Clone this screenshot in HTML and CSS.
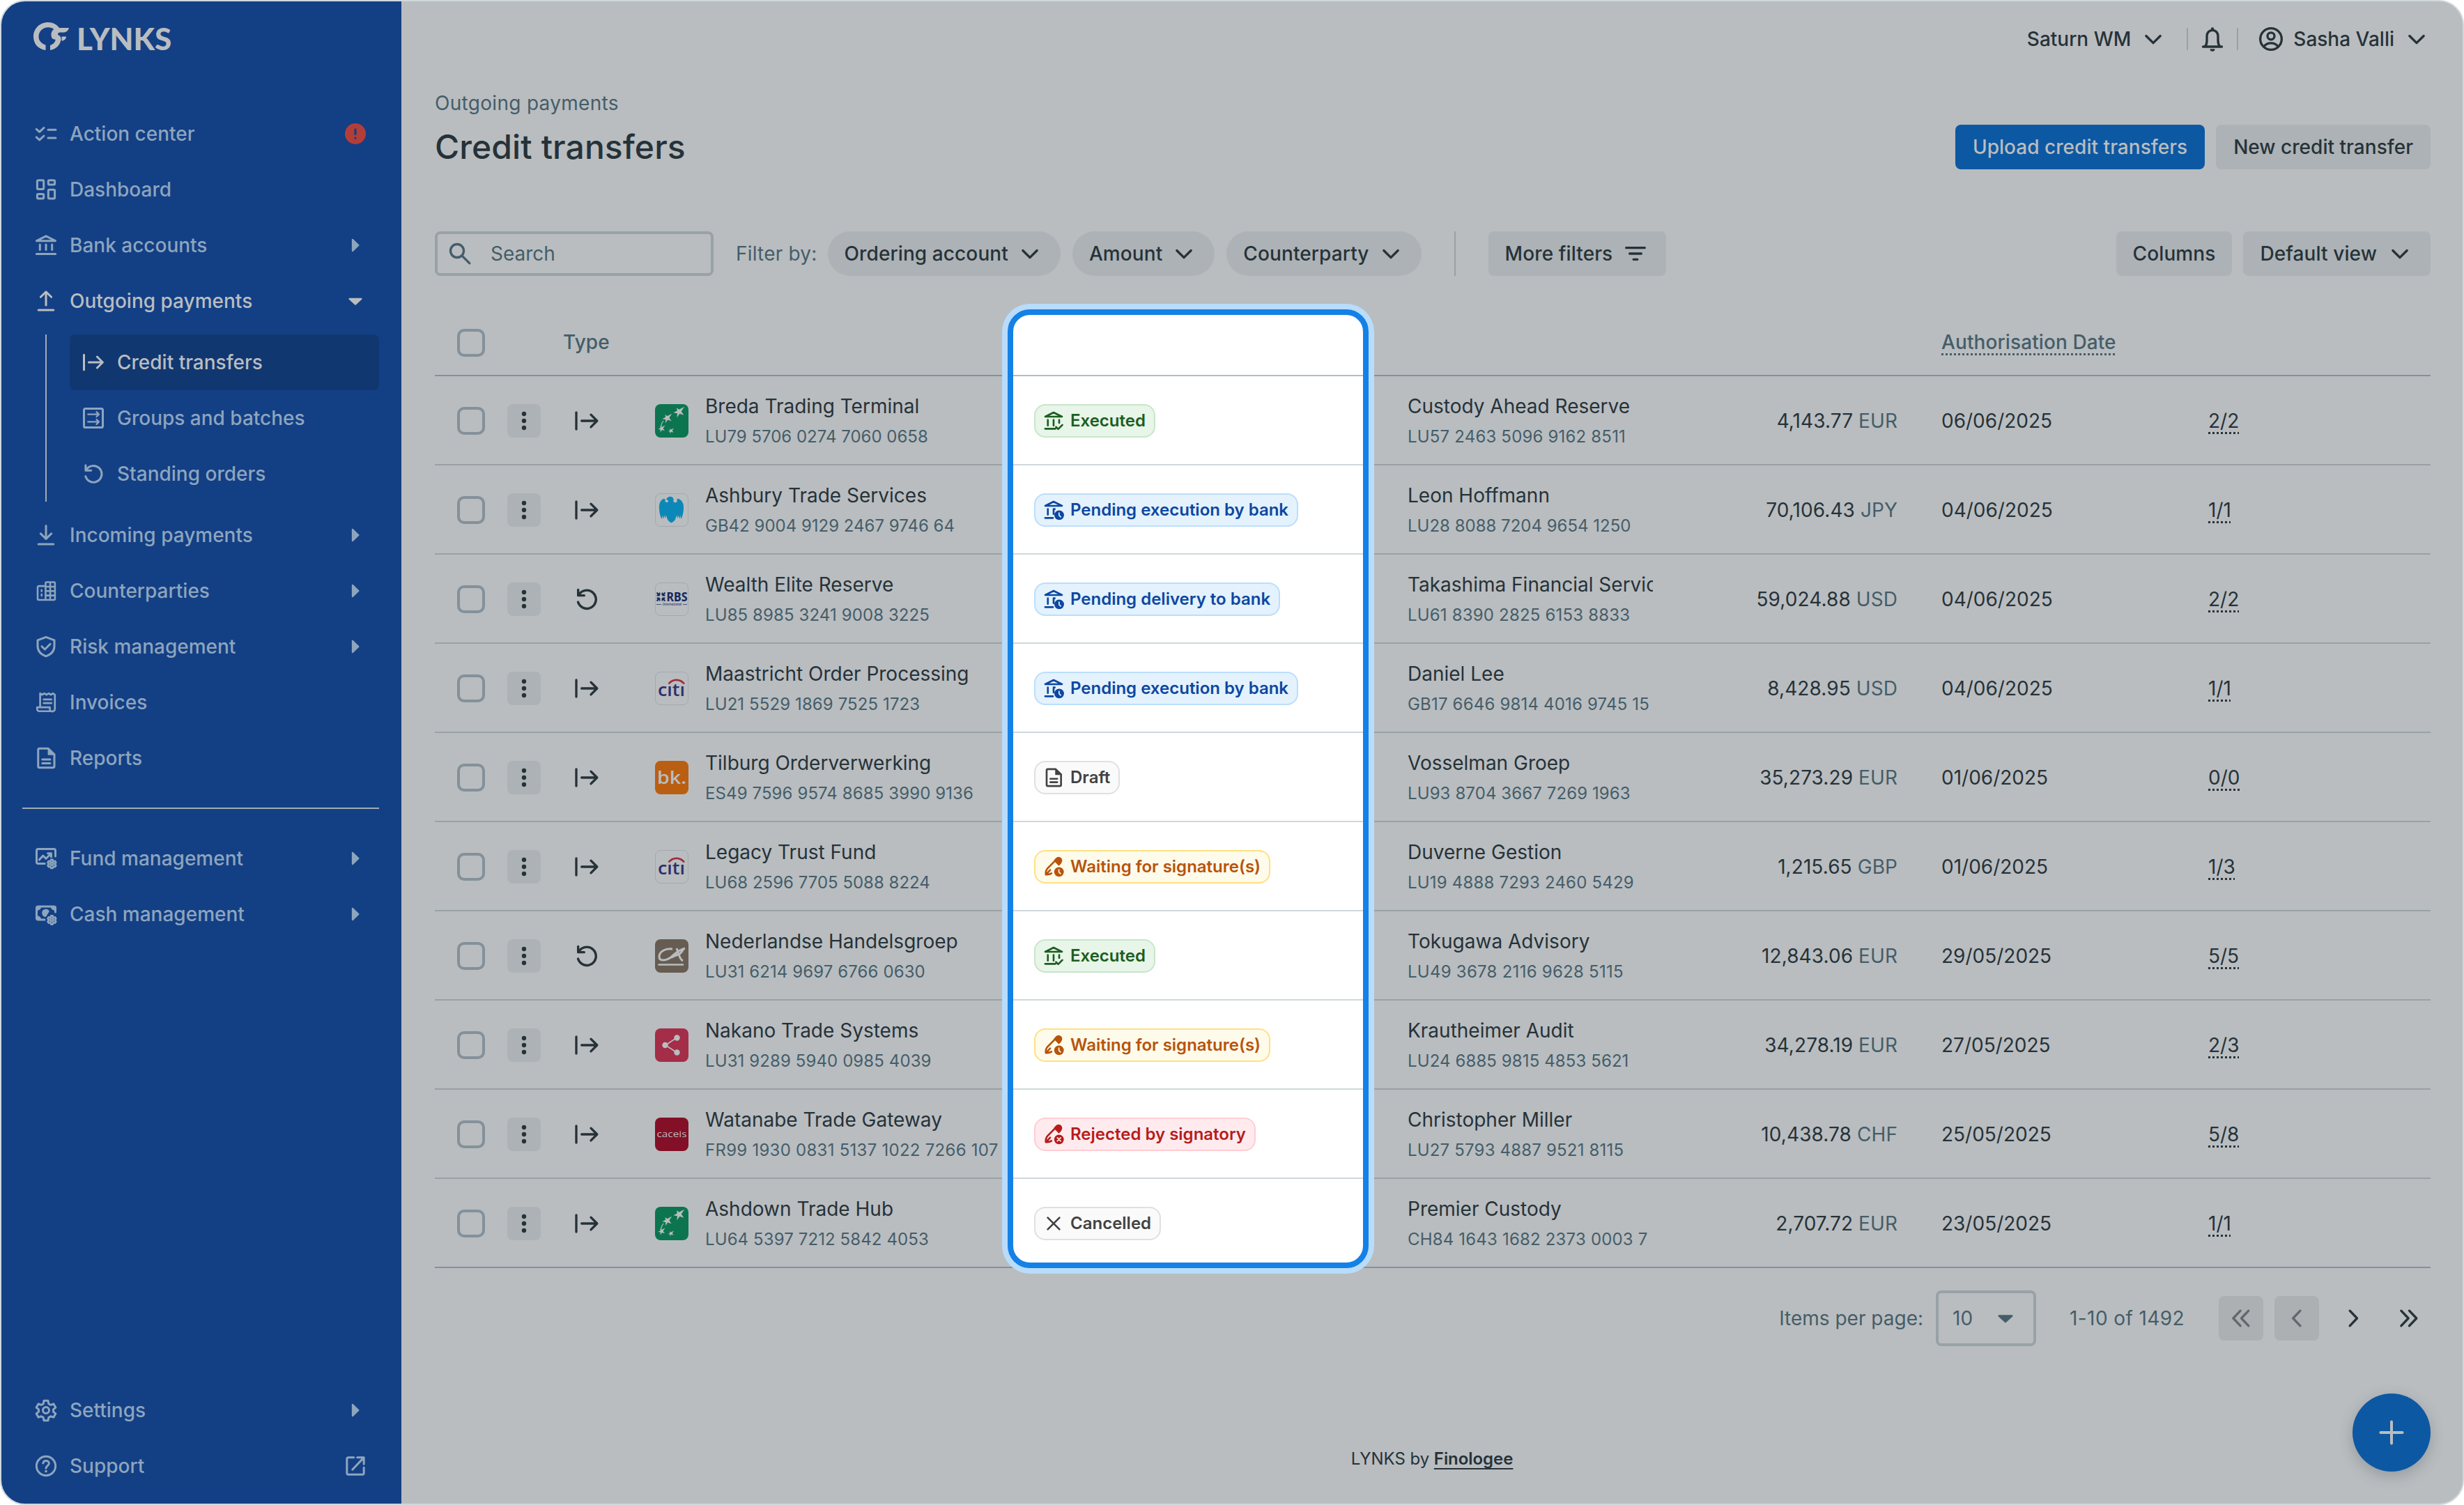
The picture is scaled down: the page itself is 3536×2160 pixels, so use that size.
FILE: index.html
```html
<!DOCTYPE html>
<html lang="en">
<head>
<meta charset="utf-8">
<title>LYNKS – Credit transfers</title>
<link rel="stylesheet" href="styles.css">
</head>
<body>
<svg class="defs" aria-hidden="true">
  <defs>
    <symbol id="i-checklist" viewBox="0 0 24 24"><path d="M2.8 7.6l3 2.6L10 6.3M2.8 15.3l3 2.6L10 14M14 8.2h7.3M14 16h7.3"/></symbol>
    <symbol id="i-dashboard" viewBox="0 0 24 24"><rect x="3.6" y="3.2" width="6.2" height="8.4" rx="1"/><rect x="14.2" y="3.2" width="6.2" height="4.2" rx="1"/><rect x="3.6" y="16.4" width="6.2" height="4.2" rx="1"/><rect x="14.2" y="12.2" width="6.2" height="8.4" rx="1"/></symbol>
    <symbol id="i-bank" viewBox="0 0 24 24"><path d="M3 7.8L12 3.2l9 4.6zM6.2 11.3v5M12 11.3v5M17.8 11.3v5M2.9 20.4h18.2"/></symbol>
    <symbol id="i-up" viewBox="0 0 24 24"><path d="M12 16V3.4M6.9 8.2L12 3.2l5.1 5M4.8 20.6h14.4"/></symbol>
    <symbol id="i-down" viewBox="0 0 24 24"><path d="M12 3v12.4M6.9 10.6l5.1 5 5.1-5M4.8 20.6h14.4"/></symbol>
    <symbol id="i-transfer" viewBox="0 0 24 24"><path d="M3 4.8v14.4M7.6 12h13M15.6 6.7L20.9 12l-5.3 5.3"/></symbol>
    <symbol id="i-batch" viewBox="0 0 24 24"><rect x="3" y="3" width="18" height="18" rx="1.4"/><path stroke-width="1.5" d="M6.8 8.4h10M15 6.1l2.3 2.3L15 10.7M6.8 15.6h10M15 13.3l2.3 2.3L15 17.9"/></symbol>
    <symbol id="i-undo" viewBox="0 0 24 24"><path d="M4.6 3.8v5h5.2M5 8.4C6.6 5.800 9.200 4.300 12.200 4.300a7.900 7.900 0 1 1-7.700 10.100"/></symbol>
    <symbol id="i-building" viewBox="0 0 24 24"><path d="M11.500 7.400H5a1 1 0 0 0-1 1v11.200a1 1 0 0 0 1 1h14.600a1 1 0 0 0 1-1V4.600a1 1 0 0 0-1-1h-7a1 1 0 0 0-1 1v16M16 3.600v17M11.500 8h9M11.500 12.200h9M11.500 16.400h9M7.800 11.200v1.200M7.800 15.400v1.200" stroke-width="1.700"/></symbol>
    <symbol id="i-shield" viewBox="0 0 24 24"><path d="M12 2.900l8 3v5.500c0 4.900-3.300 8.300-8 9.900-4.700-1.600-8-5-8-9.900V5.900zM8 11.800l2.900 2.900 5.200-5.200"/></symbol>
    <symbol id="i-invoice" viewBox="0 0 24 24"><path d="M6.400 16V3.400l1.900 1.300 2.100-1.300 2.100 1.300 2.100-1.300 2.100 1.300 1.900-1.300 1.900 1.300v13.700a2.400 2.400 0 0 1-2.400 2.400M17.900 20.500H5.600a2.100 2.100 0 0 1-2.100-2.100v-1.600h12.200v2.200a1.600 1.600 0 0 0 2.200 1.500M9.800 9.200h7.400M9.800 12.800h7.400" stroke-width="1.800"/></symbol>
    <symbol id="i-doc" viewBox="0 0 24 24"><path d="M5.800 2.900h8.400L20 8.600v11.200a1.300 1.300 0 0 1-1.300 1.300H5.800a1.300 1.300 0 0 1-1.300-1.300V4.200a1.300 1.300 0 0 1 1.300-1.300zM8.500 13.300h7.400M8.500 17h7.400"/><path d="M14.200 2.900V8.600H20z" fill="currentColor" stroke-width="1"/></symbol>
    <symbol id="i-gear" viewBox="0 0 24 24"><path d="M10 2.900h4l.55 2.900 1.900 1.100 2.750-1 2 3.500-2.200 1.850v2.200l2.200 1.850-2 3.500-2.750-1-1.900 1.100-.55 2.900h-4l-.55-2.900-1.900-1.100-2.750 1-2-3.500 2.200-1.850v-2.200L2.800 9.400l2-3.500 2.750 1 1.900-1.100z"/><circle cx="12" cy="12" r="3"/></symbol>
    <symbol id="i-fund" viewBox="0 0 24 24"><path d="M21 10V4.400a1.400 1.400 0 0 0-1.400-1.400H4.400A1.400 1.400 0 0 0 3 4.400v11.200A1.400 1.400 0 0 0 4.400 17h6.400M5.500 13.300l3.700-3.900 2.800 2.800 4.500-4.500M13.700 7.200h3.300v3.300"/><svg x="12.400" y="12" width="10.400" height="10.400" viewBox="0 0 24 24"><use href="#i-gear" stroke-width="4"/></svg></symbol>
    <symbol id="i-cash" viewBox="0 0 24 24"><path d="M21 10V6a1.400 1.400 0 0 0-1.400-1.400H4.400A1.400 1.400 0 0 0 3 6v10a1.400 1.400 0 0 0 1.400 1.400h6.200"/><path d="M2.500 4.500h5c0 2.500-2 4.200-5 4.200zM21.500 4.500h-5c0 2.500 2 4.200 5 4.200zM2.500 17.500h5c0-2.500-2-4.200-5-4.200zM15.200 9.300a3.700 3.700 0 1 0-3.300 5.300z" fill="currentColor" stroke="none"/><svg x="12.400" y="12.300" width="10.400" height="10.400" viewBox="0 0 24 24"><use href="#i-gear" stroke-width="4"/></svg></symbol>
    <symbol id="i-help" viewBox="0 0 24 24"><circle cx="12" cy="12" r="9.100"/><path d="M9.200 9.300c.3-1.600 1.400-2.300 2.800-2.300 1.700 0 2.900 1 2.900 2.500 0 2.100-2.800 2.300-2.900 4.700"/><circle cx="12" cy="17.100" r=".7" fill="currentColor" stroke-width="1"/></symbol>
    <symbol id="i-external" viewBox="0 0 24 24"><path d="M10.500 3.900H5.200a1.300 1.300 0 0 0-1.300 1.300v13.600a1.300 1.300 0 0 0 1.300 1.300h13.600a1.300 1.300 0 0 0 1.300-1.300v-5.300M13.800 3.900h6.300v6.300M19.600 4.400L9.200 15.500"/></symbol>
    <symbol id="i-alert" viewBox="0 0 24 24"><circle cx="12" cy="12" r="10" fill="#b33e38" stroke="none"/><path d="M12 8v4.300M12 16.100v.1" stroke="#133f85" stroke-width="2.200"/></symbol>
    <symbol id="i-caret-right" viewBox="0 0 24 24"><path d="M9.300 6.600v10.800L14.900 12z" fill="currentColor" stroke-width="1.500"/></symbol>
    <symbol id="i-caret-down" viewBox="0 0 24 24"><path d="M6.400 9.900h11.200L12 15.100z" fill="currentColor" stroke-width="1.500"/></symbol>
    <symbol id="i-chev-down" viewBox="0 0 24 24"><path d="M5.900 9.300l6.100 6.100 6.100-6.100"/></symbol>
    <symbol id="i-bell" viewBox="0 0 24 24"><path d="M3.900 18.600h16.200M5.900 18.200c1-1.300 1.300-3 1.300-5V9.400c0-2.800 2-5 4.800-5s4.800 2.200 4.800 5v3.800c0 2 .3 3.700 1.300 5"/><path d="M12 4.200V3.300" stroke-width="2.600"/><path d="M9.900 20.600h4.200a2.100 2.100 0 0 1-4.200 0z" fill="currentColor" stroke="none"/></symbol>
    <symbol id="i-account" viewBox="0 0 24 24"><circle cx="12" cy="12" r="9.200"/><circle cx="12" cy="9.500" r="3"/><path d="M6 18.300c1.500-1.900 3.500-2.800 6-2.800s4.500.9 6 2.800"/></symbol>
    <symbol id="i-search" viewBox="0 0 24 24"><circle cx="9.600" cy="9.600" r="5.700"/><path d="M14 14l6.300 6.300"/></symbol>
    <symbol id="i-filter" viewBox="0 0 24 24"><path d="M4 7h16M7 12h10M10.300 17h3.400"/></symbol>
    <symbol id="i-more" viewBox="0 0 24 24"><g fill="currentColor" stroke="none"><circle cx="12" cy="6" r="1.900"/><circle cx="12" cy="12" r="1.900"/><circle cx="12" cy="18" r="1.900"/></g></symbol>
    <symbol id="i-bank-check" viewBox="0 0 24 24"><path d="M3 7.500L12 3l9 4.500zM5.800 11v6M12 11v6M18 11v3.200M2.900 20.500h11M14.600 18.600l2.300 2.300 4.500-4.500"/></symbol>
    <symbol id="i-bank-clock" viewBox="0 0 24 24"><path d="M3 7.500L12 3l9 4.500zM5.800 11v6M12 16.400V11h1.200M2.900 20.500h8.400"/><circle cx="18" cy="17.500" r="5.200" fill="currentColor" stroke="none"/><path d="M17.900 15v2.700l1.700 1.700" stroke="#e3f2fd" stroke-width="1.300"/></symbol>
    <symbol id="i-sign" viewBox="0 0 24 24"><path d="M3.600 20.400c-.3-2.900.3-5 2-6.800l8.900-9M3.800 20.300c2.300.3 4.300-.1 5.900-1.200M5 19l3.300-3.500M17.600 9.700l1.800-1.900"/><path d="M13.300 5.300l2-2.100a2.900 2.900 0 0 1 4.100 0 2.900 2.900 0 0 1 0 4.100L17.500 9.500z" fill="currentColor"/></symbol>
    <symbol id="i-sign-clock" viewBox="0 0 24 24"><use href="#i-sign"/><circle cx="17.800" cy="17.500" r="5.200" fill="currentColor" stroke="none"/><path d="M17.700 15v2.700l1.700 1.700" stroke="#fff8e1" stroke-width="1.300"/></symbol>
    <symbol id="i-sign-x" viewBox="0 0 24 24"><use href="#i-sign"/><circle cx="17.800" cy="17.500" r="5.200" fill="currentColor" stroke="none"/><path d="M16 15.700l3.600 3.600M19.600 15.700L16 19.300" stroke="#ffebee" stroke-width="1.300"/></symbol>
    <symbol id="i-x" viewBox="0 0 24 24"><path d="M5.700 5.700l12.600 12.600M18.300 5.700L5.700 18.300"/></symbol>
    <symbol id="i-left" viewBox="0 0 24 24"><path d="M15 5.500L8.800 12l6.200 6.500"/></symbol>
    <symbol id="i-right" viewBox="0 0 24 24"><path d="M9.700 5.500l6.200 6.500-6.200 6.500"/></symbol>
    <symbol id="i-first" viewBox="0 0 24 24"><path d="M11.500 5.500L5.300 12l6.200 6.500M18.500 5.500L12.300 12l6.200 6.500"/></symbol>
    <symbol id="i-last" viewBox="0 0 24 24"><path d="M5.900 5.500l6.200 6.500-6.200 6.500M12.900 5.500l6.200 6.500-6.200 6.500"/></symbol>
    <symbol id="i-plus" viewBox="0 0 24 24"><path d="M12 4.200v15.600M4.200 12h15.600"/></symbol>

    <symbol id="star" viewBox="-10 -10 20 20"><path fill="#b9bdc0" stroke="none" d="M9-9L3.800-1.200 8 5 1 2.500-3.500 9-3 2-9.500 1-3.200-2.500-4-7.500 0-4.500z"/></symbol>
    <symbol id="b-bnp" viewBox="0 0 48 48"><rect width="48" height="48" rx="8" fill="#0c7550"/><use href="#star" x="26" y="3" width="17" height="17"/><use href="#star" x="10" y="13" width="15" height="15"/><use href="#star" x="4" y="30" width="11" height="11"/><use href="#star" x="18" y="34" width="10" height="9"/><path d="M12 24c-3 4-4 7-3 11" fill="none" stroke="#b9bdc0" stroke-width="1.200"/></symbol>
    <symbol id="b-barclays" viewBox="0 0 48 48"><rect x=".5" y=".5" width="47" height="47" rx="7.500" fill="#b9bdc0" stroke="#a3a9ae" stroke-width="1"/><path fill="#0c88b8" stroke="none" d="M6 22C5.500 15 7.500 10 12 8c1.500-.5 3 .2 2.500 1.800C14 12 15.500 13.500 17.500 13s2-2.500.5-3.500l-2-.5c1-2.500 3-4.200 5.500-4.200 3.500 0 5.500 2.200 5 5.200-.3 2 .5 3.300 2.500 3.300 2.500 0 3-1.800 2.500-3.500-.5-1.600 1-2.300 2.500-1.800 5 2 7.500 7 7 14-.2 6-1.500 11-3.500 15L36 31l-.5 5.500-3-5.500.3 5-2.800-4c.5 5-2 8-6.500 10.500C19 40 16.500 37 17 32l-2.800 4 .3-5-3 5.500L11 31l-1.500 6C7.500 33 6.200 28 6 22z"/></symbol>
    <symbol id="b-rbs" viewBox="0 0 48 48"><rect x=".5" y=".5" width="47" height="47" rx="7.500" fill="#b9bdc0" stroke="#a3a9ae" stroke-width="1"/><path d="M2.500 14.500l4 4M14.500 14.500l-4 4M2.500 26.500l4-4M14.500 26.500l-4-4M6.500 14.500v4M10.500 14.500v4M6.500 22.500v4M10.500 22.500v4M2.500 18.500h4M10.500 18.500h4M2.500 22.500h4M10.500 22.500h4" stroke="#14275c" stroke-width="1.800" fill="none"/><text x="16.500" y="27" font-family="Noto Sans, sans-serif" font-weight="700" font-size="17.500" textLength="30" lengthAdjust="spacingAndGlyphs" fill="#14275c" stroke="none">RBS</text><path d="M2 31.500h7M40 31.500h6" stroke="#14275c" stroke-width=".7"/><text x="11" y="33.300" font-family="Noto Sans, sans-serif" font-style="italic" font-size="5" textLength="27" lengthAdjust="spacingAndGlyphs" fill="#14275c" stroke="none">International</text></symbol>
    <symbol id="b-citi" viewBox="0 0 48 48"><rect x=".5" y=".5" width="47" height="47" rx="7.500" fill="#b9bdc0" stroke="#a3a9ae" stroke-width="1"/><text x="4" y="35" font-family="Open Sans, sans-serif" font-weight="600" font-size="26" textLength="39" lengthAdjust="spacingAndGlyphs" fill="#2f2f6b" stroke="none">cıtı</text><path d="M19.500 17.500c6-7.500 16.500-7.500 22.500 0" stroke="#a32a3c" stroke-width="2.600" fill="none" stroke-linecap="butt"/></symbol>
    <symbol id="b-bk" viewBox="0 0 48 48"><rect width="48" height="48" rx="8" fill="#ba5f12"/><text x="3" y="33" font-family="Open Sans, sans-serif" font-weight="600" font-size="25" textLength="42" lengthAdjust="spacingAndGlyphs" fill="#b9bdc0" stroke="none">bk.</text></symbol>
    <symbol id="b-ca" viewBox="0 0 48 48"><rect width="48" height="48" rx="8" fill="#665c51"/><path fill="none" stroke="#b9bdc0" stroke-width="3" stroke-linecap="butt" d="M25 14C15 12.500 6 18 6 25c0 7 9 6 16 1.500C28 22 31 16.500 43 13M31 13l3 8c1 4 2.500 8 6 10M23 26.500c5-3.500 9-3 13-6 2.500-2 4-4.500 5-7"/><path d="M4.500 36.500h36.500" stroke="#b9bdc0" stroke-width="2.600" stroke-linecap="butt"/></symbol>
    <symbol id="b-share" viewBox="0 0 48 48"><rect width="48" height="48" rx="8" fill="#a42d48"/><path d="M31 13.500L15 24l16 10.500" stroke="#b9bdc0" stroke-width="1.600" fill="none"/><g fill="#b9bdc0" stroke="none"><circle cx="31.500" cy="13.500" r="4.200"/><circle cx="14.500" cy="24" r="4.200"/><circle cx="31.500" cy="34.500" r="4.200"/></g></symbol>
    <symbol id="b-caceis" viewBox="0 0 48 48"><rect width="48" height="48" rx="8" fill="#831026"/><text x="2.500" y="27.500" font-family="Open Sans, sans-serif" font-weight="400" font-size="12" textLength="43" lengthAdjust="spacingAndGlyphs" fill="#b9bdc0" stroke="none">caceis</text></symbol>
  </defs>
</svg>

<div class="window">
  <aside class="sidebar">
    <div class="brand">
      <svg class="brand-mark" viewBox="0 0 52 40"><path d="M17.500 40v-7.500C11 30.500 7.500 26 7.500 20.500 7.500 13 13.500 7.300 21 7.300c4 0 7.500 1.500 9.800 4L37 8C33.500 3 28 0 21 0 9 0 0 9 0 20.500 0 31 7 38.500 17.500 40z"/><path d="M51 8H36c-7 0-11 4.500-10.500 11 .2 3 1.500 5 4 5.500 1.500 0 2.500 0 2 1.500-1 3.500-4 6-7.500 7v7C32 38.500 38.500 33 39.500 24.500c.3-3-1-5-3.500-6-1.500-.7-1.500-4 2.500-4H43c4 0 7-2.500 8-6.500zM40.500 20.500H47c-.2 3.500-2.500 6-6.500 6z"/></svg>
      <span class="brand-name">LYNKS</span>
    </div>
    <nav class="nav">
      <a class="nav-item"><svg class="ic"><use href="#i-checklist"/></svg><span>Action center</span><svg class="ic end"><use href="#i-alert"/></svg></a>
      <a class="nav-item"><svg class="ic"><use href="#i-dashboard"/></svg><span>Dashboard</span></a>
      <a class="nav-item"><svg class="ic"><use href="#i-bank"/></svg><span>Bank accounts</span><svg class="ic end"><use href="#i-caret-right"/></svg></a>
      <a class="nav-item open"><svg class="ic"><use href="#i-up"/></svg><span>Outgoing payments</span><svg class="ic end"><use href="#i-caret-down"/></svg></a>
      <div class="subnav">
        <a class="sub-item active"><svg class="ic"><use href="#i-transfer"/></svg><span>Credit transfers</span></a>
        <a class="sub-item"><svg class="ic"><use href="#i-batch"/></svg><span>Groups and batches</span></a>
        <a class="sub-item"><svg class="ic"><use href="#i-undo"/></svg><span>Standing orders</span></a>
      </div>
      <a class="nav-item"><svg class="ic"><use href="#i-down"/></svg><span>Incoming payments</span><svg class="ic end"><use href="#i-caret-right"/></svg></a>
      <a class="nav-item"><svg class="ic"><use href="#i-building"/></svg><span>Counterparties</span><svg class="ic end"><use href="#i-caret-right"/></svg></a>
      <a class="nav-item"><svg class="ic"><use href="#i-shield"/></svg><span>Risk management</span><svg class="ic end"><use href="#i-caret-right"/></svg></a>
      <a class="nav-item"><svg class="ic"><use href="#i-invoice"/></svg><span>Invoices</span></a>
      <a class="nav-item"><svg class="ic"><use href="#i-doc"/></svg><span>Reports</span></a>
      <div class="nav-divider"></div>
      <a class="nav-item"><svg class="ic"><use href="#i-fund"/></svg><span>Fund management</span><svg class="ic end"><use href="#i-caret-right"/></svg></a>
      <a class="nav-item"><svg class="ic"><use href="#i-cash"/></svg><span>Cash management</span><svg class="ic end"><use href="#i-caret-right"/></svg></a>
    </nav>
    <nav class="nav nav-bottom">
      <a class="nav-item"><svg class="ic"><use href="#i-gear"/></svg><span>Settings</span><svg class="ic end"><use href="#i-caret-right"/></svg></a>
      <a class="nav-item"><svg class="ic"><use href="#i-help"/></svg><span>Support</span><svg class="ic end"><use href="#i-external"/></svg></a>
    </nav>
  </aside>

  <main class="main">
    <header class="topbar">
      <div class="picker"><span>Saturn WM</span><svg class="ic lg"><use href="#i-chev-down"/></svg></div>
      <div class="bell"><svg class="ic lg"><use href="#i-bell"/></svg></div>
      <div class="picker"><svg class="ic lg"><use href="#i-account"/></svg><span>Sasha Valli</span><svg class="ic lg"><use href="#i-chev-down"/></svg></div>
    </header>

    <section class="page-head">
      <div class="titles">
        <div class="crumb">Outgoing payments</div>
        <h1 class="title">Credit transfers</h1>
      </div>
      <div class="actions">
        <button class="btn wide primary">Upload credit transfers</button>
        <button class="btn wide">New credit transfer</button>
      </div>
    </section>

    <section class="filters">
      <div class="search"><svg class="ic lg"><use href="#i-search"/></svg><span>Search</span></div>
      <span class="filter-label">Filter by:</span>
      <div class="pills">
        <button class="btn pill">Ordering account<svg class="ic lg"><use href="#i-chev-down"/></svg></button>
        <button class="btn pill">Amount<svg class="ic lg"><use href="#i-chev-down"/></svg></button>
        <button class="btn pill">Counterparty<svg class="ic lg"><use href="#i-chev-down"/></svg></button>
      </div>
      <div class="rule"></div>
      <button class="btn more">More filters<svg class="ic lg"><use href="#i-filter"/></svg></button>
      <div class="view-tools">
        <button class="btn">Columns</button>
        <button class="btn more">Default view<svg class="ic lg"><use href="#i-chev-down"/></svg></button>
      </div>
    </section>

    <section class="table">
      <div class="row head">
        <span class="check"></span><span></span><span>Type</span><span></span><span></span><span></span><span class="date"><span class="dotted">Authorisation Date</span></span><span></span>
      </div>
      <div class="row">
        <span class="check"></span><span class="menu"><svg class="ic lg"><use href="#i-more"/></svg></span><span class="type"><svg class="ic lg"><use href="#i-transfer"/></svg></span>
        <div class="account"><svg class="logo"><use href="#b-bnp"/></svg><div class="pair"><b>Breda Trading Terminal</b><i>LU79 5706 0274 7060 0658</i></div></div>
        <div class="pair"><b>Custody Ahead Reserve</b><i class="t2">LU57 2463 5096 9162 8511</i></div>
        <span class="amount">4,143.77 <em>EUR</em></span><span class="date">06/06/2025</span><span class="dotted">2/2</span>
      </div>
      <div class="row">
        <span class="check"></span><span class="menu"><svg class="ic lg"><use href="#i-more"/></svg></span><span class="type"><svg class="ic lg"><use href="#i-transfer"/></svg></span>
        <div class="account"><svg class="logo"><use href="#b-barclays"/></svg><div class="pair"><b>Ashbury Trade Services</b><i>GB42 9004 9129 2467 9746 64</i></div></div>
        <div class="pair"><b>Leon Hoffmann</b><i>LU28 8088 7204 9654 1250</i></div>
        <span class="amount">70,106.43 <em>JPY</em></span><span class="date">04/06/2025</span><span class="dotted">1/1</span>
      </div>
      <div class="row">
        <span class="check"></span><span class="menu"><svg class="ic lg"><use href="#i-more"/></svg></span><span class="type"><svg class="ic lg"><use href="#i-undo"/></svg></span>
        <div class="account"><svg class="logo"><use href="#b-rbs"/></svg><div class="pair"><b>Wealth Elite Reserve</b><i class="t1">LU85 8985 3241 9008 3225</i></div></div>
        <div class="pair"><b>Takashima Financial Services</b><i class="t2">LU61 8390 2825 6153 8833</i></div>
        <span class="amount">59,024.88 <em>USD</em></span><span class="date">04/06/2025</span><span class="dotted">2/2</span>
      </div>
      <div class="row">
        <span class="check"></span><span class="menu"><svg class="ic lg"><use href="#i-more"/></svg></span><span class="type"><svg class="ic lg"><use href="#i-transfer"/></svg></span>
        <div class="account"><svg class="logo"><use href="#b-citi"/></svg><div class="pair"><b>Maastricht Order Processing</b><i class="t1">LU21 5529 1869 7525 1723</i></div></div>
        <div class="pair"><b>Daniel Lee</b><i class="t2">GB17 6646 9814 4016 9745 15</i></div>
        <span class="amount">8,428.95 <em>USD</em></span><span class="date">04/06/2025</span><span class="dotted">1/1</span>
      </div>
      <div class="row">
        <span class="check"></span><span class="menu"><svg class="ic lg"><use href="#i-more"/></svg></span><span class="type"><svg class="ic lg"><use href="#i-transfer"/></svg></span>
        <div class="account"><svg class="logo"><use href="#b-bk"/></svg><div class="pair"><b>Tilburg Orderverwerking</b><i class="t1">ES49 7596 9574 8685 3990 9136</i></div></div>
        <div class="pair"><b>Vosselman Groep</b><i class="t1">LU93 8704 3667 7269 1963</i></div>
        <span class="amount">35,273.29 <em>EUR</em></span><span class="date">01/06/2025</span><span class="dotted">0/0</span>
      </div>
      <div class="row">
        <span class="check"></span><span class="menu"><svg class="ic lg"><use href="#i-more"/></svg></span><span class="type"><svg class="ic lg"><use href="#i-transfer"/></svg></span>
        <div class="account"><svg class="logo"><use href="#b-citi"/></svg><div class="pair"><b>Legacy Trust Fund</b><i>LU68 2596 7705 5088 8224</i></div></div>
        <div class="pair"><b>Duverne Gestion</b><i class="t2">LU19 4888 7293 2460 5429</i></div>
        <span class="amount">1,215.65 <em>GBP</em></span><span class="date">01/06/2025</span><span class="dotted">1/3</span>
      </div>
      <div class="row">
        <span class="check"></span><span class="menu"><svg class="ic lg"><use href="#i-more"/></svg></span><span class="type"><svg class="ic lg"><use href="#i-undo"/></svg></span>
        <div class="account"><svg class="logo"><use href="#b-ca"/></svg><div class="pair"><b>Nederlandse Handelsgroep</b><i class="t1">LU31 6214 9697 6766 0630</i></div></div>
        <div class="pair"><b>Tokugawa Advisory</b><i class="t3">LU49 3678 2116 9628 5115</i></div>
        <span class="amount">12,843.06 <em>EUR</em></span><span class="date">29/05/2025</span><span class="dotted">5/5</span>
      </div>
      <div class="row">
        <span class="check"></span><span class="menu"><svg class="ic lg"><use href="#i-more"/></svg></span><span class="type"><svg class="ic lg"><use href="#i-transfer"/></svg></span>
        <div class="account"><svg class="logo"><use href="#b-share"/></svg><div class="pair"><b>Nakano Trade Systems</b><i class="t1">LU31 9289 5940 0985 4039</i></div></div>
        <div class="pair"><b>Krautheimer Audit</b><i class="t1">LU24 6885 9815 4853 5621</i></div>
        <span class="amount">34,278.19 <em>EUR</em></span><span class="date">27/05/2025</span><span class="dotted">2/3</span>
      </div>
      <div class="row">
        <span class="check"></span><span class="menu"><svg class="ic lg"><use href="#i-more"/></svg></span><span class="type"><svg class="ic lg"><use href="#i-transfer"/></svg></span>
        <div class="account"><svg class="logo"><use href="#b-caceis"/></svg><div class="pair"><b>Watanabe Trade Gateway</b><i class="t3">FR99 1930 0831 5137 1022 7266 107</i></div></div>
        <div class="pair"><b>Christopher Miller</b><i class="t2">LU27 5793 4887 9521 8115</i></div>
        <span class="amount">10,438.78 <em>CHF</em></span><span class="date">25/05/2025</span><span class="dotted">5/8</span>
      </div>
      <div class="row last">
        <span class="check"></span><span class="menu"><svg class="ic lg"><use href="#i-more"/></svg></span><span class="type"><svg class="ic lg"><use href="#i-transfer"/></svg></span>
        <div class="account"><svg class="logo"><use href="#b-bnp"/></svg><div class="pair"><b>Ashdown Trade Hub</b><i class="t1">LU64 5397 7212 5842 4053</i></div></div>
        <div class="pair"><b>Premier Custody</b><i class="t2">CH84 1643 1682 2373 0003 7</i></div>
        <span class="amount">2,707.72 <em>EUR</em></span><span class="date">23/05/2025</span><span class="dotted">1/1</span>
      </div>

      <div class="spotlight">
        <div class="status-head"></div>
        <div class="status"><span class="chip green"><svg class="ic"><use href="#i-bank-check"/></svg>Executed</span></div>
        <div class="status"><span class="chip blue"><svg class="ic"><use href="#i-bank-clock"/></svg>Pending execution by bank</span></div>
        <div class="status"><span class="chip blue"><svg class="ic"><use href="#i-bank-clock"/></svg>Pending delivery to bank</span></div>
        <div class="status"><span class="chip blue"><svg class="ic"><use href="#i-bank-clock"/></svg>Pending execution by bank</span></div>
        <div class="status"><span class="chip grey"><svg class="ic"><use href="#i-doc"/></svg>Draft</span></div>
        <div class="status"><span class="chip amber"><svg class="ic"><use href="#i-sign-clock"/></svg>Waiting for signature(s)</span></div>
        <div class="status"><span class="chip green"><svg class="ic"><use href="#i-bank-check"/></svg>Executed</span></div>
        <div class="status"><span class="chip amber"><svg class="ic"><use href="#i-sign-clock"/></svg>Waiting for signature(s)</span></div>
        <div class="status"><span class="chip red"><svg class="ic"><use href="#i-sign-x"/></svg>Rejected by signatory</span></div>
        <div class="status"><span class="chip grey"><svg class="ic"><use href="#i-x"/></svg>Cancelled</span></div>
      </div>
    </section>

    <section class="pager">
      <span>Items per page:</span>
      <div class="select"><span>10</span><svg class="ic lg"><use href="#i-caret-down"/></svg></div>
      <span class="range">1-10 of 1492</span>
      <div class="pages">
        <button class="page off"><svg class="ic lg"><use href="#i-first"/></svg></button>
        <button class="page off"><svg class="ic lg"><use href="#i-left"/></svg></button>
        <button class="page"><svg class="ic lg"><use href="#i-right"/></svg></button>
        <button class="page"><svg class="ic lg"><use href="#i-last"/></svg></button>
      </div>
    </section>

    <footer class="foot">LYNKS by&nbsp;<a class="foot-link">Finologee</a></footer>
    <button class="fab"><svg class="ic lg"><use href="#i-plus"/></svg></button>
  </main>
</div>
</body>
</html>
```
FILE: styles.css
```css
* { box-sizing: border-box; }
html, body { margin: 0; height: 100%; background: #fff; }
body { font-family: Inter, "Liberation Sans", sans-serif; font-size: 28px; line-height: 40px; color: #263238; }
.defs { position: absolute; width: 0; height: 0; }

.ic { width: 36px; height: 36px; flex: none; display: block; fill: none; stroke: currentColor; stroke-width: 2; stroke-linecap: round; stroke-linejoin: round; }
.ic.lg { width: 40px; height: 40px; }

.window { display: flex; width: 3536px; height: 2160px; border: 2px solid #cfd8dc; border-radius: 36px; overflow: hidden; background: #b9bdc0; }

/* Sidebar */
.sidebar { width: 574px; flex: none; display: flex; flex-direction: column; background: #133f85; padding: 30px 0 14px; }
.brand { display: flex; height: 40px; padding-left: 46px; margin-bottom: 80px; color: #b9bdc0; }
.brand-mark { width: 52px; height: 40px; fill: currentColor; }
.brand-name { margin-left: 10px; font: 900 44px/46px Lato, sans-serif; letter-spacing: -0.1px; }
.nav { display: flex; flex-direction: column; }
.nav-bottom { margin-top: auto; }
.nav-item, .sub-item { display: flex; align-items: center; gap: 16px; height: 80px; color: #8da5bd; font-weight: 500; }
.nav-item { padding: 0 48px 0 46px; }
.nav-item .end { margin-left: auto; }
.nav-item.open { color: #b9bdc0; }
.subnav { margin: 8px 32px 8px 63px; padding-left: 33px; border-left: 2px solid #a2abb2; }
.sub-item { padding: 0 16px; border-radius: 8px; }
.sub-item.active { background: #113770; color: #b9bdc0; }
.nav-divider { height: 2px; margin: 31px 32px 31px 30px; background: #a2abb2; }

/* Main */
.main { position: relative; flex: 1; padding: 0 46px 0 48px; }
.topbar { display: flex; justify-content: flex-end; align-items: center; height: 108px; font-weight: 500; }
.picker { display: flex; align-items: center; gap: 12px; }
.bell { margin: 0 27px 0 28px; padding: 0 15px; height: 32px; display: flex; align-items: center; border: solid #98a1a6; border-width: 0 2px; }

.page-head { display: flex; justify-content: space-between; align-items: flex-end; margin-top: 18px; height: 115px; }
.titles { display: flex; flex-direction: column; gap: 11px; }
.crumb { color: #455d69; letter-spacing: 0.3px; }
.title { margin: 0; font-size: 48px; line-height: 64px; font-weight: 500; letter-spacing: 0.1px; }
.actions { display: flex; gap: 16px; }
.btn { display: flex; align-items: center; gap: 11px; height: 64px; padding: 0 24px; border: 0; border-radius: 8px; background: #adb2b6; color: #263238; font: 500 28px/40px Inter, sans-serif; letter-spacing: 0.1px; white-space: nowrap; }
.btn.wide { padding: 0 25px; letter-spacing: 0.03px; }
.btn.more { gap: 13px; }
.btn.primary { background: #0d58a2; color: #b9bdc0; }
.btn.pill { border-radius: 32px; }

.filters { display: flex; align-items: center; margin-top: 89px; height: 64px; }
.search { display: flex; align-items: center; width: 400px; height: 64px; padding-left: 12px; gap: 24px; border: 4px solid #98a2a7; border-radius: 8px; color: #455d69; }
.filter-label { margin: 0 15px 0 32px; color: #455d69; letter-spacing: 0.2px; }
.pills { display: flex; gap: 17px; }
.rule { width: 2px; height: 64px; margin: 0 47px; background: #98a1a6; }
.view-tools { display: flex; gap: 16px; margin-left: auto; }

/* Table */
.table { position: relative; margin-top: 46px; }
.row { display: grid; grid-template-columns: 72px 80px 132px 1080px 352px 351px 446px 1fr; align-items: center; height: 128px; padding: 2px 0 0 32px; border-bottom: 2px solid #98a1a6; white-space: nowrap; }
.row.head { height: 98px; border-color: #84919a; color: #455d69; font-weight: 500; letter-spacing: 0.1px; }
.row.head .check { margin-top: 2px; }
.row.last { border-color: #84919a; }
.check { width: 40px; height: 40px; border: 4px solid #84919a; border-radius: 10px; }
.menu { display: flex; justify-content: center; align-items: center; width: 48px; height: 48px; border-radius: 8px; background: #adb2b6; }
.type { padding-left: 14px; }
.account { display: flex; align-items: center; gap: 24px; }
.logo { width: 48px; height: 48px; display: block; }
.pair { overflow: hidden; padding-top: 2px; }
.pair b, .pair i { display: block; line-height: 44px; font-weight: 400; font-style: normal; }
.pair i { font-size: 24px; color: #455d69; }
.pair .t1 { letter-spacing: 0.1px; }
.pair .t2 { letter-spacing: 0.18px; }
.pair .t3 { letter-spacing: 0.26px; }
.amount { text-align: right; letter-spacing: 0.08px; }
.amount em { font-style: normal; color: #455d69; }
.date { padding-left: 63px; }
.dotted { text-decoration: underline dotted 3.4px; text-underline-offset: 6px; text-decoration-skip-ink: none; }

.spotlight { position: absolute; left: 822px; top: 2px; width: 518px; height: 1376px; border: 8px solid #1481e6; border-radius: 32px; box-shadow: 0 0 0 8px #b9dcfa; background: #fff; overflow: hidden; }
.status-head { height: 88px; border-bottom: 2px solid #b0bec5; }
.status { display: flex; align-items: center; height: 128px; padding: 2px 0 0 30px; border-bottom: 2px solid #cfd8dc; }
.chip { display: flex; align-items: center; gap: 8px; height: 48px; padding: 0 12px 0 10px; border: 2px solid; border-radius: 16px; font-size: 24px; font-weight: 600; }
.chip .ic { width: 32px; height: 32px; }
.chip.green { background: #e8f5e9; border-color: #c8e6c9; color: #1b5e20; }
.chip.blue { background: #e3f2fd; border-color: #bbdefb; color: #0d47a1; }
.chip.grey { background: #fafafa; border-color: #e0e0e0; color: #424242; }
.chip.amber { background: #fffbeb; border-color: #ffe082; color: #b7540b; }
.chip.red { background: #ffebee; border-color: #ffcdd2; color: #b71c1c; }

/* Pagination */
.pager { display: flex; justify-content: flex-end; align-items: center; margin-top: 32px; height: 80px; color: #455d69; }
.select { display: flex; align-items: center; justify-content: space-between; width: 144px; height: 80px; margin: 0 48px 0 18px; padding: 0 20px; border: 4px solid #98a2a7; border-radius: 8px; }
.range { letter-spacing: 0.4px; }
.pages { display: flex; gap: 16px; margin-left: 49px; }
.page { display: flex; align-items: center; justify-content: center; width: 64px; height: 64px; padding: 0; border: 0; border-radius: 8px; background: none; color: #263238; }
.page.off { background: #acb0b3; color: #62686c; }

.foot { display: flex; justify-content: center; margin-top: 142px; font-size: 24px; margin-left: -3px; margin-right: -1px; letter-spacing: -0.05px; }
.foot-link { font-weight: 600; text-decoration: underline; text-underline-offset: 5px; text-decoration-thickness: 2px; }
.fab { position: absolute; right: 46px; bottom: 46px; display: flex; align-items: center; justify-content: center; width: 112px; height: 112px; border: 0; border-radius: 50%; background: #0d58a2; color: #b9bdc0; box-shadow: 0 6px 20px rgba(38, 50, 56, 0.25); }
.fab .ic { width: 48px; height: 48px; }
```
